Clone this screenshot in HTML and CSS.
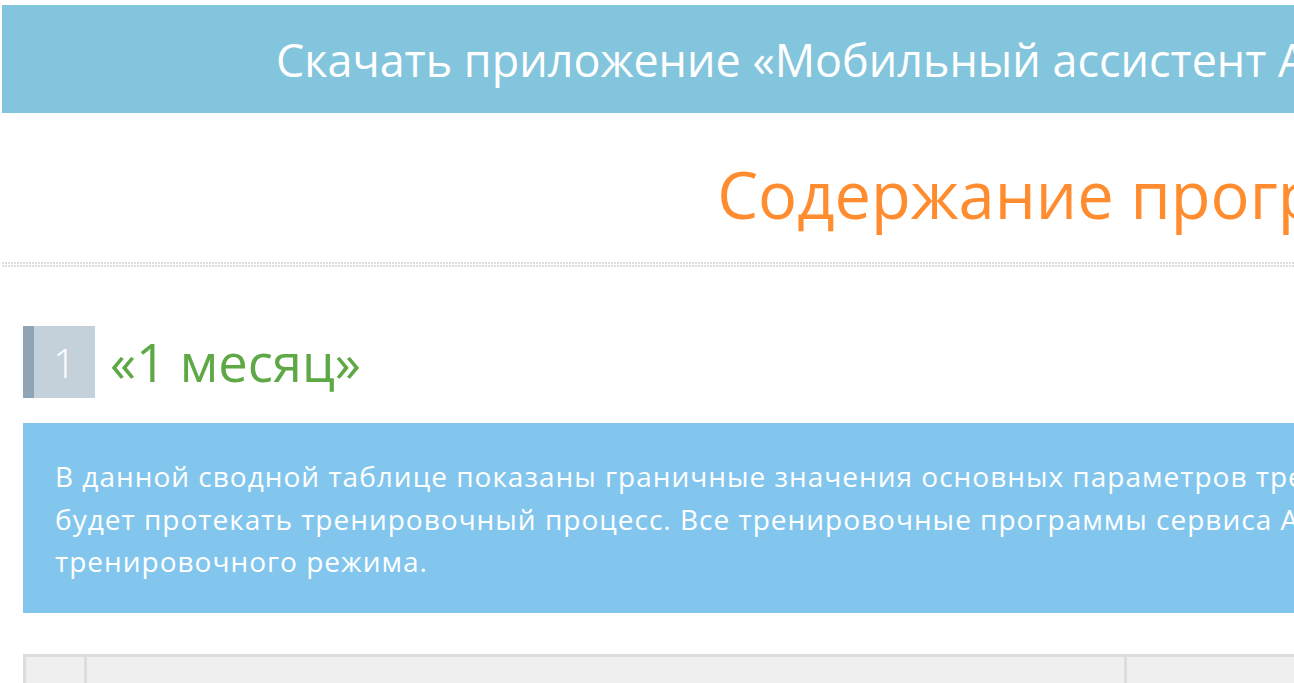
FILE: index.html
```html
<!DOCTYPE html>
<html lang="ru">
<head>
<meta charset="utf-8">
<title>Содержание программы</title>
<link rel="stylesheet" href="styles.css">
</head>
<body>
<div class="page">
  <a class="app-banner" href="#">Скачать приложение «Мобильный ассистент Atletiq» для iOS, iPad и Android</a>

  <h1 class="page-title">Содержание программы</h1>
  <div class="dots"></div>

  <section class="period">
    <div class="period-head">
      <span class="period-num">1</span>
      <h2 class="period-name">«1 месяц»</h2>
    </div>

    <div class="note">
      <p>В данной сводной таблице показаны граничные значения основных параметров тренировок по неделям, в рамках которых<br>будет протекать тренировочный процесс. Все тренировочные программы сервиса Atletiq требуют строгого соблюдения<br>тренировочного режима.</p>
    </div>

    <table class="summary">
      <tr>
        <td class="c-num"></td>
        <td class="c-name"></td>
        <td class="c-val"></td>
      </tr>
    </table>
  </section>
</div>
</body>
</html>
```

FILE: styles.css
```css
html, body {
  margin: 0;
  padding: 0;
  background: #fff;
  overflow: hidden;
}

body {
  font-family: "Open Sans", "Noto Sans", sans-serif;
  color: #333;
}

.page {
  width: 2212px;
  padding: 5px 0 0 2px;
}

.app-banner {
  display: flex;
  align-items: center;
  justify-content: center;
  height: 108px;
  background: #83c5dc;
  color: #fff;
  font-size: 44.9px;
  text-decoration: none;
  white-space: nowrap;
}

.page-title {
  margin: 37px 0 0;
  text-align: center;
  color: #ff8c2e;
  font-weight: 400;
  font-size: 65px;
  line-height: 88px;
  white-space: nowrap;
}

/* double row of small grey dots under the title */
.dots {
  margin-top: 24px;
  height: 6px;
  background-image: linear-gradient(90deg, #dcdcdc 2px, transparent 2px);
  background-size: 3px 3px;
  -webkit-mask-image: linear-gradient(180deg, #000 2px, transparent 2px);
  -webkit-mask-size: 3px 3px;
}

.period {
  padding: 58px 0 0 21px;
}

.period-head {
  display: flex;
  align-items: center;
  gap: 15px;
}

.period-num {
  box-sizing: border-box;
  width: 72px;
  height: 72px;
  display: flex;
  align-items: center;
  justify-content: center;
  background: #c4d0da;
  border-left: 11px solid #8fa5b5;
  color: #fff;
  font-size: 40px;
  font-weight: 300;
}

.period-name {
  margin: 0;
  color: #5fa846;
  font-weight: 400;
  font-size: 52.5px;
  line-height: 72px;
  white-space: nowrap;
}

.note {
  margin-top: 25px;
  height: 190px;
  box-sizing: border-box;
  padding: 32px 32px 0;
  background: #82c6ee;
  color: #fff;
}

.note p {
  margin: 0;
  font-size: 28px;
  letter-spacing: 1px;
  line-height: 42.5px;
  white-space: nowrap;
}

.summary {
  margin-top: 41px;
  width: 100%;
  border-collapse: collapse;
  border: 3px solid #dddddd;
}

.summary td {
  height: 60px;
  background: #efefef;
  border-left: 3px solid #dddddd;
  padding: 0;
}

.c-num { width: 58px; }
.c-name { width: 1037px; }
```
